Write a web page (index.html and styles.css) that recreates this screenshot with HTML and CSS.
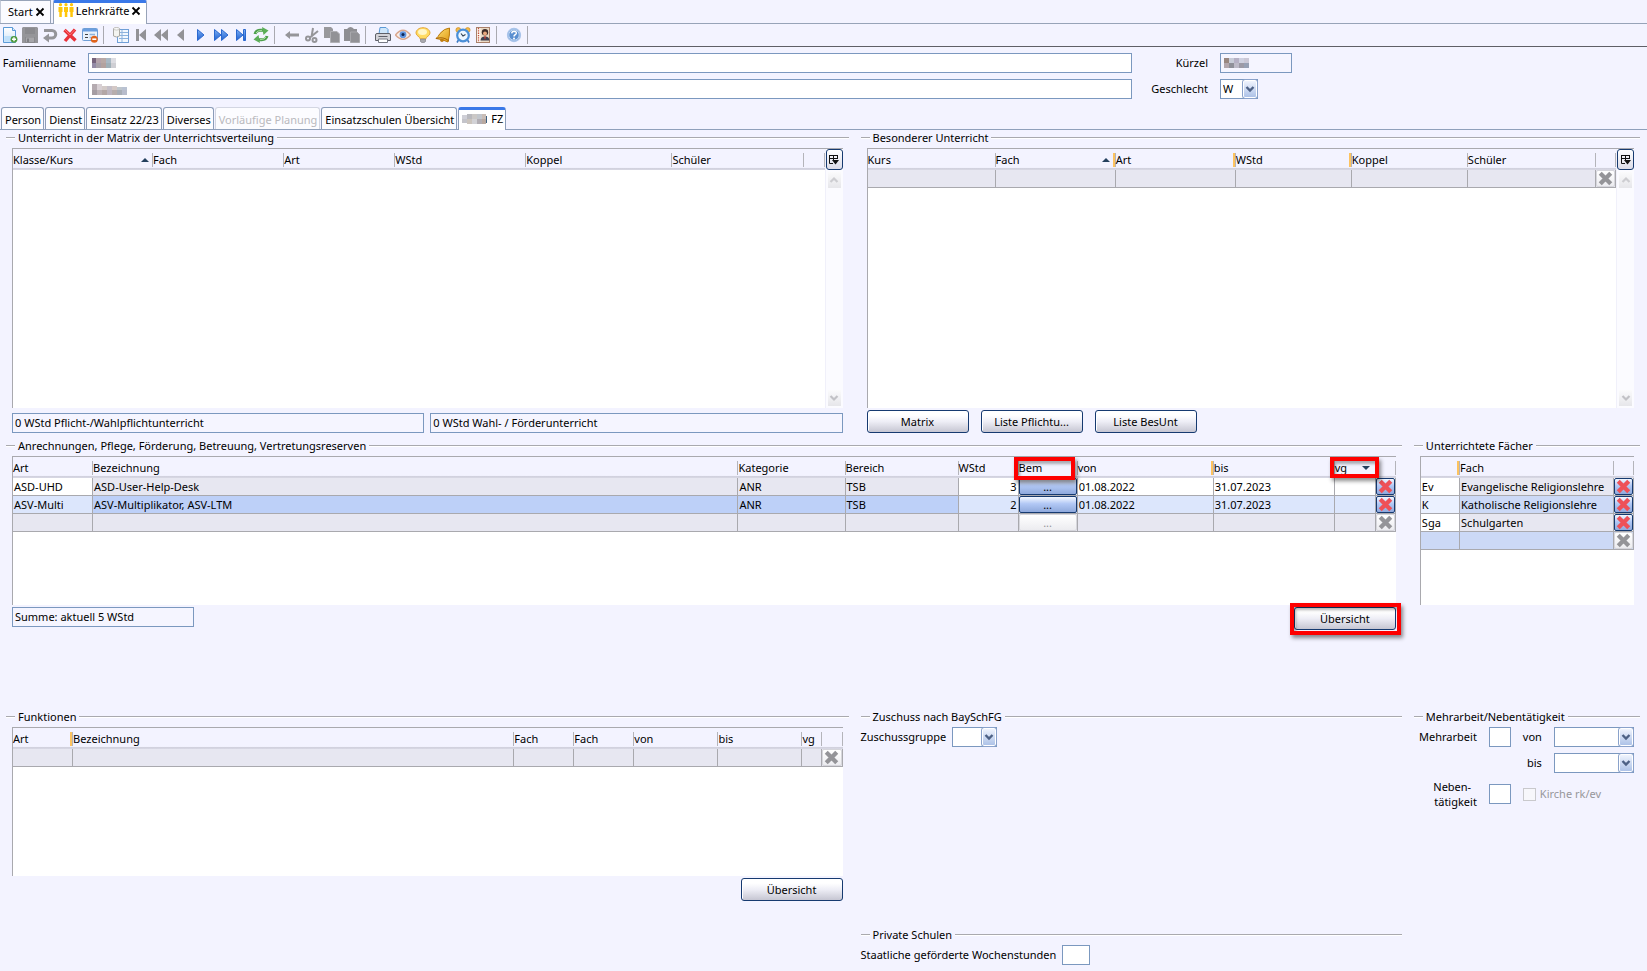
FILE: index.html
```html
<!DOCTYPE html>
<html lang="de">
<head>
<meta charset="utf-8">
<title>Lehrkräfte</title>
<link rel="stylesheet" href="styles.css">
</head>
<body>
<svg class="defs" aria-hidden="true">
  <defs>
    <linearGradient id="gBlue" x1="0" y1="0" x2="0" y2="1"><stop offset="0" stop-color="#7db0f5"/><stop offset="1" stop-color="#1d5fd0"/></linearGradient>
    <linearGradient id="gGold" x1="0" y1="0" x2="1" y2="1"><stop offset="0" stop-color="#ffe27a"/><stop offset="1" stop-color="#e09a10"/></linearGradient>
    <linearGradient id="gPage" x1="0" y1="0" x2="0" y2="1"><stop offset="0" stop-color="#ffffff"/><stop offset="1" stop-color="#cfe4f8"/></linearGradient>
    <symbol id="cross" viewBox="2 2 12 12"><path d="M3.8 3.8 L12.2 12.2 M12.2 3.8 L3.8 12.2" fill="none" stroke="currentColor" stroke-width="3.4"/></symbol>
    <symbol id="close" viewBox="0 0 10 10"><path d="M1.5 1.5 L8.5 8.5 M8.5 1.5 L1.5 8.5" fill="none" stroke="#000" stroke-width="1.8"/></symbol>
    <symbol id="chev" viewBox="0 0 10 8"><path d="M1.5 2 L5 5.5 L8.5 2" fill="none" stroke="#4d6185" stroke-width="2.4"/></symbol>
    <symbol id="colsel" viewBox="0 0 12 12"><path d="M1 1.5 H10 M1 4.5 H10 M1.5 1 V9.5 H5 M5.5 1 V6 M9.5 1 V5" fill="none" stroke="#111"/><path d="M4 6 H11 L7.5 10.5 Z" fill="#111"/></symbol>
    <symbol id="up" viewBox="0 0 12 12"><path d="M2.5 8 L6 4.5 L9.5 8" fill="none" stroke="#cdcdd1" stroke-width="2.2"/></symbol>
    <symbol id="down" viewBox="0 0 12 12"><path d="M2.5 4 L6 7.5 L9.5 4" fill="none" stroke="#c2c2c6" stroke-width="2.2"/></symbol>
  </defs>
</svg>

<nav class="windows" aria-label="Fenster">
  <div class="wtab"><span>Start</span><button class="x" aria-label="Start schließen"><svg width="10" height="10"><use href="#close"/></svg></button></div>
  <div class="wtab active">
    <svg width="16" height="14" viewBox="0 0 16 14" fill="#ffc60a"><circle cx="2.5" cy="1.7" r="1.6"/><circle cx="8" cy="1.7" r="1.6"/><circle cx="13.5" cy="1.7" r="1.6"/><path d="M.5 4 H4.5 V9 H3.8 V14 H1.3 V9 H.5Z M6 4 H10 V9 H9.3 V14 H6.8 V9 H6Z M11.5 4 H15.5 V9 H14.8 V14 H12.3 V9 H11.5Z"/></svg>
    <span>Lehrkräfte</span><button class="x" aria-label="Lehrkräfte schließen"><svg width="10" height="10"><use href="#close"/></svg></button></div>
</nav>

<div class="toolbar" role="toolbar" aria-label="Werkzeuge">
  <button aria-label="Neu"><svg viewBox="0 0 16 16"><path d="M1.5 .5 H10.5 L13.5 3.5 V15.5 H1.5Z" fill="url(#gPage)" stroke="#5b9ad6"/><path d="M10.5 .5 V3.5 H13.5" fill="#dcecfb" stroke="#5b9ad6"/><path d="M2.5 9 H12.5 V14.5 H2.5Z" fill="#bfe0fa"/><circle cx="12" cy="12.3" r="3.4" fill="#4d9a3c"/><path d="M12 10.3 V14.3 M10 12.3 H14" stroke="#fff" stroke-width="1.4"/></svg></button>
  <button aria-label="Speichern"><svg viewBox="0 0 16 16"><path d="M1 0 H15 L16 1 V16 H0 V1Z" fill="#959599"/><path d="M3 1 H13 V7 H3Z M3 10 H13 V16 H3Z" fill="#8a8a8e"/><path d="M4 10.5 H12 V15 H4Z" fill="#a6a6aa"/><path d="M5 11.5 H7 V15 H5Z" fill="#808084"/></svg></button>
  <button aria-label="Rückgängig"><svg viewBox="0 0 16 16"><path d="M2 3.5 H10 A3.7 3.7 0 0 1 10 11 H6" fill="none" stroke="#959599" stroke-width="3"/><path d="M1 11 L7 6.5 V15.5Z" fill="#959599"/></svg></button>
  <button aria-label="Löschen"><svg viewBox="0 0 16 16"><path d="M2.5 3 L13.5 13.5 M13 2.5 L3 14" fill="none" stroke="#e8323a" stroke-width="3.4"/><path d="M3 3 L8 8 L12.5 3" fill="none" stroke="#ff7070"/></svg></button>
  <button aria-label="Datensatz entfernen"><svg viewBox="0 0 16 16"><rect x=".5" y="1.5" width="15" height="12" rx="1" fill="#e9f2fc" stroke="#6f9fd6"/><path d="M1 2 H15 V4.5 H1Z" fill="#6a9fe0"/><path d="M3 7.5 H6 M3 10.5 H6" stroke="#444" stroke-width="1.2"/><path d="M7.5 7.5 H13 M7.5 10.5 H10" stroke="#8fb4dc" stroke-width="1.6"/><circle cx="12.3" cy="12.2" r="3.5" fill="#e0641c"/><path d="M10.3 12.2 H14.3" stroke="#fff" stroke-width="1.6"/></svg></button>
  <span class="sep"></span>
  <button aria-label="Listenansicht"><svg viewBox="0 0 16 16"><rect x="4.5" y="2.5" width="11" height="13" fill="#f2f8fe" stroke="#6f9fd6"/><path d="M6 5.5 H15 M6 8.5 H15 M6 11.5 H15 M9 3 V15" stroke="#8db3dd"/><path d="M.5 1.5 Q3.500 -.5 6.500 1.500 V9 Q3.500 11 .5 9Z" fill="#f4f4f0" stroke="#aaa9a4"/><ellipse cx="3.500" cy="1.800" rx="3" ry="1.200" fill="#fff" stroke="#b5b4b0" stroke-width=".7"/></svg></button>
  <button aria-label="Erster"><svg viewBox="0 0 16 16" fill="#929296"><path d="M3 2 H6 V14 H3Z M13 2 V14 L6 8Z"/></svg></button>
  <button aria-label="Schnell zurück"><svg viewBox="0 0 16 16" fill="#929296"><path d="M8 2 V14 L1 8Z M15 2 V14 L8 8Z"/></svg></button>
  <button aria-label="Zurück"><svg viewBox="0 0 16 16" fill="#929296"><path d="M11 2 V14 L4 8Z"/></svg></button>
  <button aria-label="Weiter"><svg viewBox="0 0 16 16" fill="url(#gBlue)" stroke="#2a68cf"><path d="M4.500 2.500 V13.500 L11 8Z"/></svg></button>
  <button aria-label="Schnell vor"><svg viewBox="0 0 16 16" fill="url(#gBlue)" stroke="#2a68cf"><path d="M1.500 2.500 V13.500 L8 8Z M8.500 2.500 V13.500 L15 8Z"/></svg></button>
  <button aria-label="Letzter"><svg viewBox="0 0 16 16" fill="url(#gBlue)" stroke="#2a68cf"><path d="M3.500 2.500 V13.500 L10 8Z M10.500 2.500 H12.500 V13.500 H10.500Z"/></svg></button>
  <button aria-label="Aktualisieren"><svg viewBox="0 0 16 16"><path d="M2 7 Q3 3 8 3.300 H10" fill="none" stroke="#4ea04c" stroke-width="3"/><path d="M9 0 L15.500 3.500 L10.500 8Z" fill="#5cae58"/><path d="M14 9 Q13 13 8 12.700 H6" fill="none" stroke="#4ea04c" stroke-width="3"/><path d="M7 16 L.5 12.500 L5.500 8Z" fill="#5cae58"/><path d="M3 6 Q4 3.500 9 3.300 M13 10 Q12 12.500 7 12.700" fill="none" stroke="#a9dba2"/></svg></button>
  <span class="sep"></span>
  <button aria-label="Pfeil zurück"><svg viewBox="0 0 16 16" fill="#959599"><path d="M1 8 L6 4 V6.500 H15 V9.500 H6 V12Z"/></svg></button>
  <button aria-label="Ausschneiden"><svg viewBox="0 0 16 16" fill="none" stroke="#959599" stroke-width="2"><path d="M9 1 L7.500 10 M14 4 L6 10.500"/><circle cx="4" cy="11.500" r="2"/><circle cx="10.500" cy="13" r="2"/></svg></button>
  <button aria-label="Kopieren"><svg viewBox="0 0 16 16"><path d="M0 0 H7 L9 2 V11 H0Z" fill="#98989c"/><path d="M6.500 4.500 H13 L15.500 7 V15.500 H6.500Z" fill="#929296" stroke="#b0b0b4"/></svg></button>
  <button aria-label="Einfügen"><svg viewBox="0 0 16 16"><path d="M0 2 H3 Q6.500 -2 10 2 H13 V14 H0Z" fill="#8f8f93"/><path d="M6.500 5 H13 L15.500 7.500 V15.500 H6.500Z" fill="#929296" stroke="#a8a8ac"/></svg></button>
  <span class="sep"></span>
  <button aria-label="Drucken"><svg viewBox="0 0 16 16"><path d="M4 7 L5 .5 H11 L13 2.500 V7Z" fill="#cfe6fa" stroke="#5b9ad6"/><path d="M.5 8 Q.5 6.500 2 6.500 H14 Q15.500 6.500 15.500 8 V13.500 H.5Z" fill="#d3d3d8" stroke="#5e6068"/><path d="M3.500 9.500 H12.500" stroke="#5e6068"/><path d="M3.500 12 H12.500 V15.500 H3.500Z" fill="#fff" stroke="#777a84"/></svg></button>
  <button aria-label="Vorschau"><svg viewBox="0 0 16 16"><path d="M.5 8 Q8 -1.500 15.500 8 Q8 16.500 .5 8Z" fill="#fbeee6" stroke="#d8a58c" stroke-width="1.300"/><circle cx="8" cy="7.700" r="3.400" fill="#5f93de"/><circle cx="8" cy="7.500" r="1.500" fill="#0d2554"/></svg></button>
  <button aria-label="Hinweis"><svg viewBox="0 0 16 16"><path d="M8 .7 C3.500 .7 1 3.500 1 6 C1 9 5 9.500 5.300 12 H10.700 C11 9.500 15 9 15 6 C15 3.500 12.500 .7 8 .7Z" fill="#ffdb62" stroke="#e5a83a"/><ellipse cx="7.500" cy="5" rx="4.500" ry="3" fill="#fff6c8"/><path d="M5.500 12 H10.500 V14.500 L9 15.700 H7 L5.500 14.500Z" fill="#a8a8ae" stroke="#77777c" stroke-width=".6"/></svg></button>
  <button aria-label="Erinnerung"><svg viewBox="0 0 16 16"><path d="M14.500 1 Q15 8 13 15 Q7 12 1 11.500 Q3 10 5 6.500 Q9 1.500 14.500 1Z" fill="url(#gGold)" stroke="#b9790c"/><path d="M1 11.500 Q8 9 14 14" fill="none" stroke="#a8650a"/><circle cx="7" cy="13.300" r="1.800" fill="#c07c10"/></svg></button>
  <button aria-label="Wecker"><svg viewBox="0 0 16 16"><circle cx="3.300" cy="3" r="2.400" fill="#f3bb4a" stroke="#cc8a20" stroke-width=".7"/><circle cx="12.700" cy="3" r="2.400" fill="#f3bb4a" stroke="#cc8a20" stroke-width=".7"/><path d="M3.500 13 L2 15.500 M12.500 13 L14 15.500" stroke="#3b78c0" stroke-width="1.600"/><circle cx="8" cy="8.500" r="5.800" fill="#eef7ff" stroke="#4a8fd8" stroke-width="2.200"/><path d="M6 6.500 L8 9 L10.500 7.500" fill="none" stroke="#345" stroke-width="1.200"/></svg></button>
  <button aria-label="Adressbuch"><svg viewBox="0 0 16 16"><rect x="1.500" y=".5" width="13" height="15" fill="#fbf6ee" stroke="#a8806a"/><path d="M3.500 1 V15" stroke="#c34d3c" stroke-width="1.300" stroke-dasharray="1.300 1"/><path d="M5.500 1 H14 V15 H5.500Z" fill="#ead9c4"/><circle cx="10" cy="5.200" r="3.200" fill="#3e2c28"/><circle cx="10" cy="6.600" r="2" fill="#e8a87e"/><path d="M5.500 13.500 Q5.700 9.500 10 9.500 Q14.300 9.500 14.500 13.500Z" fill="#3c4152"/><path d="M9 9.500 H11 L10 13Z" fill="#d23c2e"/></svg></button>
  <span class="sep"></span>
  <button aria-label="Hilfe"><svg viewBox="0 0 16 16"><circle cx="8" cy="8" r="6.400" fill="#5a8fd0" stroke="#a9c4ea" stroke-width="1.500"/><circle cx="8" cy="8" r="5.200" fill="none" stroke="#d5e4f7" stroke-width=".8"/><path d="M5.700 6.300 Q6 4.200 8.100 4.200 Q10.400 4.300 10.300 6.200 Q10.200 7.300 8.800 8 Q8 8.500 8 9.600" fill="none" stroke="#fff" stroke-width="1.500"/><circle cx="8" cy="11.500" r="1" fill="#fff"/></svg></button>
  <span class="sep"></span>
</div>

<form class="person">
  <label for="fam">Familienname</label>
  <div class="masked"><input id="fam" class="field">
    <svg class="mosaic" width="24" height="10" shape-rendering="crispEdges"><path d="M0 0h4v5H0z" fill="#77647c"/><path d="M4 0h5v5H4z" fill="#b4a3ab"/><path d="M9 0h5v5H9z" fill="#b8a9a6"/><path d="M14 0h5v5h-5z" fill="#a9b8c4"/><path d="M19 0h5v5h-5z" fill="#dddde2"/><path d="M0 5h4v5H0z" fill="#948ba6"/><path d="M4 5h5v5H4z" fill="#a7a0a8"/><path d="M9 5h5v5H9z" fill="#b3a29f"/><path d="M14 5h5v5h-5z" fill="#9fb0b8"/><path d="M19 5h5v5h-5z" fill="#cfcfd4"/></svg></div>
  <label for="kuerzel">Kürzel</label>
  <div class="masked"><input id="kuerzel" class="field w-kuerzel" readonly>
    <svg class="mosaic" width="25" height="10" shape-rendering="crispEdges"><path d="M0 0h5v5H0z" fill="#98867f"/><path d="M5 0h5v5H5z" fill="#c8ccd8"/><path d="M10 0h5v5h-5z" fill="#b5b0c4"/><path d="M15 0h5v5h-5z" fill="#cfd1e0"/><path d="M20 0h5v5h-5z" fill="#cbc8d6"/><path d="M0 5h5v5H0z" fill="#b2a6ac"/><path d="M5 5h5v5H5z" fill="#8f9099"/><path d="M10 5h5v5h-5z" fill="#bdbac8"/><path d="M15 5h5v5h-5z" fill="#9c9aa6"/><path d="M20 5h5v5h-5z" fill="#97a0b4"/></svg></div>
  <label for="vor">Vornamen</label>
  <div class="masked"><input id="vor" class="field">
    <svg class="mosaic" width="35" height="11" shape-rendering="crispEdges"><path d="M0 0h5v6H0z" fill="#b5abb0"/><path d="M5 0h5v6H5z" fill="#d8d0d4"/><path d="M10 2h5v4h-5z" fill="#d3cac7"/><path d="M15 2h5v4h-5z" fill="#c4bfc8"/><path d="M20 2h5v4h-5z" fill="#d3c8c5"/><path d="M25 3h5v3h-5z" fill="#bfc6cc"/><path d="M30 3h5v3h-5z" fill="#b9c2d2"/><path d="M0 6h5v5H0z" fill="#a59da2"/><path d="M5 6h5v5H5z" fill="#bcb3b6"/><path d="M10 6h5v5h-5z" fill="#b3a7a6"/><path d="M15 6h5v5h-5z" fill="#bdb6c0"/><path d="M20 6h5v5h-5z" fill="#b7aead"/><path d="M25 6h5v5h-5z" fill="#a8aeb6"/><path d="M30 6h5v5h-5z" fill="#b7bccb"/></svg></div>
  <label for="geschl">Geschlecht</label>
  <div class="combo w-geschl"><select id="geschl"><option>W</option></select><span class="arrow"><svg width="10" height="8"><use href="#chev"/></svg></span></div>
</form>

<nav class="tabs" aria-label="Bereiche">
  <button class="tab">Person</button><button class="tab">Dienst</button><button class="tab">Einsatz 22/23</button><button class="tab">Diverses</button><button class="tab" disabled>Vorläufige Planung</button><button class="tab">Einsatzschulen Übersicht</button><button class="tab active"><svg width="25" height="10" shape-rendering="crispEdges"><path d="M0 1h5v4H0z" fill="#cfcfd6"/><path d="M5 0h5v5H5z" fill="#b9b9be"/><path d="M10 0h5v5h-5z" fill="#cbc8c6"/><path d="M15 0h5v5h-5z" fill="#c2c6cc"/><path d="M20 0h4v5h-4z" fill="#c9bdb6"/><path d="M0 5h5v4H0z" fill="#c4c4ca"/><path d="M5 5h5v5H5z" fill="#cbc4bd"/><path d="M10 5h5v5h-5z" fill="#d2d2d6"/><path d="M15 5h5v5h-5z" fill="#b2aeb4"/><path d="M20 5h4v5h-4z" fill="#b9a9a0"/><path d="M24 2h1v7h-1z" fill="#3c5f80"/></svg>FZ</button>
</nav>

<main class="board">
  <section class="c1">
    <h2>Unterricht in der Matrix der Unterrichtsverteilung</h2>
    <div class="box tall">
      <table class="t-matrix">
        <colgroup><col><col><col><col><col><col><col></colgroup>
        <thead><tr><th class="asc">Klasse/Kurs</th><th>Fach</th><th>Art</th><th>WStd</th><th>Koppel</th><th>Schüler</th><th></th></tr></thead>
      </table>
      <div class="scroll"><button class="colsel" aria-label="Spalten wählen"><svg width="12" height="12"><use href="#colsel"/></svg></button><button class="sb" aria-label="Nach oben"><svg width="12" height="12"><use href="#up"/></svg></button><span class="track"></span><button class="sb" aria-label="Nach unten"><svg width="12" height="12"><use href="#down"/></svg></button></div>
    </div>
    <div class="foot">
      <input class="field grow" readonly aria-label="Pflichtunterricht" value="0 WStd Pflicht-/Wahlpflichtunterricht">
      <input class="field grow" readonly aria-label="Wahlunterricht" value="0 WStd Wahl- / Förderunterricht">
    </div>
  </section>

  <section class="c23">
    <h2>Besonderer Unterricht</h2>
    <div class="box tall">
      <table class="t-bes">
        <colgroup><col><col><col><col><col><col><col></colgroup>
        <thead><tr><th>Kurs</th><th class="asc mark">Fach</th><th class="mark">Art</th><th class="mark">WStd</th><th>Koppel</th><th>Schüler</th><th></th></tr></thead>
        <tbody><tr class="empty"><td></td><td></td><td></td><td></td><td></td><td></td><td class="act"><button class="del" disabled aria-label="Zeile löschen"><svg width="15" height="15"><use href="#cross"/></svg></button></td></tr></tbody>
      </table>
      <div class="scroll"><button class="colsel" aria-label="Spalten wählen"><svg width="12" height="12"><use href="#colsel"/></svg></button><button class="sb" aria-label="Nach oben"><svg width="12" height="12"><use href="#up"/></svg></button><span class="track"></span><button class="sb" aria-label="Nach unten"><svg width="12" height="12"><use href="#down"/></svg></button></div>
    </div>
    <div class="foot wide-gap">
      <button class="btn">Matrix</button><button class="btn">Liste Pflichtu...</button><button class="btn">Liste BesUnt</button>
    </div>
  </section>

  <section class="c12">
    <h2>Anrechnungen, Pflege, Förderung, Betreuung, Vertretungsreserven</h2>
    <div class="box">
      <table class="t-anr">
        <colgroup><col><col><col><col><col><col><col><col><col><col></colgroup>
        <thead><tr><th>Art</th><th>Bezeichnung</th><th>Kategorie</th><th>Bereich</th><th>WStd</th><th>Bem<span class="hl hl-bem"></span></th><th class="mark">von</th><th>bis</th><th class="desc">vg<span class="hl hl-vg"></span></th><th></th></tr></thead>
        <tbody>
          <tr><td>ASD-UHD</td><td class="ro">ASD-User-Help-Desk</td><td class="ro">ANR</td><td class="ro">TSB</td><td class="num">3</td><td class="act"><button class="more">...</button></td><td>01.08.2022</td><td>31.07.2023</td><td></td><td class="act"><button class="del" aria-label="Zeile löschen"><svg width="15" height="15"><use href="#cross"/></svg></button></td></tr>
          <tr class="sel"><td>ASV-Multi</td><td class="ro">ASV-Multiplikator, ASV-LTM</td><td class="ro">ANR</td><td class="ro">TSB</td><td class="num">2</td><td class="act"><button class="more">...</button></td><td>01.08.2022</td><td>31.07.2023</td><td></td><td class="act"><button class="del" aria-label="Zeile löschen"><svg width="15" height="15"><use href="#cross"/></svg></button></td></tr>
          <tr class="empty"><td></td><td></td><td></td><td></td><td></td><td class="act"><button class="more" disabled>...</button></td><td></td><td></td><td></td><td class="act"><button class="del" disabled aria-label="Zeile löschen"><svg width="15" height="15"><use href="#cross"/></svg></button></td></tr>
        </tbody>
      </table>
    </div>
    <div class="foot between">
      <input class="field w-sum" readonly aria-label="Summe" value="Summe: aktuell 5 WStd">
      <div class="hl-wrap"><button class="btn">Übersicht</button><span class="hl hl-btn"></span></div>
    </div>
  </section>

  <section class="c3">
    <h2>Unterrichtete Fächer</h2>
    <div class="box">
      <table class="t-fach">
        <colgroup><col><col><col></colgroup>
        <thead><tr><th class="mark"></th><th>Fach</th><th></th></tr></thead>
        <tbody>
          <tr><td>Ev</td><td class="ro">Evangelische Religionslehre</td><td class="act"><button class="del" aria-label="Zeile löschen"><svg width="15" height="15"><use href="#cross"/></svg></button></td></tr>
          <tr class="alt"><td>K</td><td class="ro">Katholische Religionslehre</td><td class="act"><button class="del" aria-label="Zeile löschen"><svg width="15" height="15"><use href="#cross"/></svg></button></td></tr>
          <tr><td>Sga</td><td class="ro">Schulgarten</td><td class="act"><button class="del" aria-label="Zeile löschen"><svg width="15" height="15"><use href="#cross"/></svg></button></td></tr>
          <tr class="alt-empty"><td></td><td></td><td class="act"><button class="del" disabled aria-label="Zeile löschen"><svg width="15" height="15"><use href="#cross"/></svg></button></td></tr>
        </tbody>
      </table>
    </div>
  </section>

  <section class="c1 lower">
    <h2>Funktionen</h2>
    <div class="box">
      <table class="t-funk">
        <colgroup><col><col><col><col><col><col><col><col></colgroup>
        <thead><tr><th class="mark">Art</th><th>Bezeichnung</th><th>Fach</th><th>Fach</th><th>von</th><th>bis</th><th>vg</th><th></th></tr></thead>
        <tbody><tr class="empty"><td></td><td></td><td></td><td></td><td></td><td></td><td></td><td class="act"><button class="del" disabled aria-label="Zeile löschen"><svg width="15" height="15"><use href="#cross"/></svg></button></td></tr></tbody>
      </table>
    </div>
    <div class="foot end"><button class="btn">Übersicht</button></div>
  </section>

  <section class="c2 lower">
    <h2>Zuschuss nach BaySchFG</h2>
    <div class="line"><label for="zg">Zuschussgruppe</label>
      <div class="combo w-zg"><select id="zg"><option></option></select><span class="arrow"><svg width="10" height="8"><use href="#chev"/></svg></span></div></div>
  </section>

  <section class="c3 lower">
    <h2>Mehrarbeit/Nebentätigkeit</h2>
    <div class="extra">
      <label for="ma">Mehrarbeit</label><input id="ma" class="field">
      <label for="von">von</label><div class="combo"><select id="von"><option></option></select><span class="arrow"><svg width="10" height="8"><use href="#chev"/></svg></span></div>
      <label for="bis" class="bis">bis</label><div class="combo"><select id="bis"><option></option></select><span class="arrow"><svg width="10" height="8"><use href="#chev"/></svg></span></div>
      <label for="nt" class="two">Neben-&nbsp;&nbsp;<br>tätigkeit</label><input id="nt" class="field">
      <label class="check"><input type="checkbox" disabled>Kirche rk/ev</label>
    </div>
  </section>

  <section class="c2 private">
    <h2>Private Schulen</h2>
    <div class="line"><label for="ws">Staatliche geförderte Wochenstunden</label><input id="ws" class="field w-ws"></div>
  </section>
</main>
</body>
</html>
```

FILE: styles.css
```css
:root {
  --bg: #f3f3ff;
  --edge: #7b98bf;
  --rule: #a9a9ae;
  --ro: #e7e7f1;
  --navy: #163a70;
}
* { box-sizing: border-box; }
body {
  margin: 0;
  background: var(--bg);
  color: #000;
  font: 11px/16px "Noto Sans", "Open Sans", sans-serif;
}
button, input, select { font: inherit; color: inherit; margin: 0; padding: 0; border-radius: 0; }
button { background: none; border: 0; }
svg { display: block; }
.defs { position: absolute; width: 0; height: 0; }

/* window tabs */
.windows { display: flex; gap: 2px; height: 24px; border-bottom: 1px solid #97a3b8; }
.wtab {
  display: flex; align-items: flex-start; gap: 2px; height: 23px; padding: 3px 5px 0 7px;
  background: #fbfbff; border: 1px solid #97a3b8; border-bottom: 0; border-left-color: #c4cad8;
}
.wtab.active { background: #fff; border-left-color: #97a3b8; border-top: 3px solid #3a78e8; padding: 0 5px 0 4px; height: 24px; border-radius: 2px 2px 0 0; }
.wtab .x { width: 10px; height: 14px; padding-top: 2px; }

/* toolbar */
.toolbar { display: flex; height: 23px; align-items: center; border-bottom: 1px solid #5f5f66; }
.toolbar button { width: 20px; height: 20px; padding: 2px; }
.toolbar svg { width: 16px; height: 16px; }
.sep { width: 11px; height: 18px; background: linear-gradient(#a9a9b0, #a9a9b0) 3px 0 / 1px 100% no-repeat; }

/* fields */
.field {
  height: 20px; border: 1px solid var(--edge); background: #fff; padding: 0 2px 1px; min-width: 0; width: 100%;
}
.field:read-only { background: #f5f5ff; }
.field.grow { flex: 1; }
.masked { position: relative; height: 20px; }
.masked .mosaic { position: absolute; left: 4px; top: 5px; }
.combo { position: relative; height: 20px; }
.combo select {
  appearance: none; width: 100%; height: 20px; border: 1px solid var(--edge); background: #fff; padding: 0 18px 0 2px;
}
.combo .arrow {
  position: absolute; right: 0; top: 0; width: 16px; height: 20px; display: grid; place-items: center; pointer-events: none;
  border: 1px solid #8aa2cb; border-radius: 3px; background: linear-gradient(#f4f7ff, #a9bfe6); box-shadow: inset 0 0 0 1px #fff;
}
.w-kuerzel { width: 72px; }
.w-geschl { width: 38px; }
.w-zg { width: 45px; }
.w-ws { width: 28px; }
.w-sum { width: 182px; }

.person {
  display: grid; grid-template-columns: 76px minmax(0, 1044fr) 64px minmax(0, 427fr);
  column-gap: 12px; row-gap: 6px; padding: 6px 0 8px; align-items: center;
}
.person > label { text-align: right; }

/* section tabs */
.tabs { display: flex; gap: 1px; padding-left: 1px; height: 23px; align-items: flex-end; border-bottom: 1px solid #8fa0bb; }
.tab {
  height: 22px; padding: 2px 2px 0 3px; white-space: nowrap;
  background: #fcfcff; border: 1px solid #8b9cb8; border-bottom: 0; border-radius: 3px 3px 0 0;
}
.tab:disabled { color: #b9b9bd; border-color: #d3d6e2; }
.tab.active { display: flex; align-items: center; gap: 4px; height: 23px; margin-bottom: -1px; padding: 0 2px 3px 3px; background: #fff; border-top: 3px solid #3a78e8; }

/* sections */
.board {
  display: grid; grid-template-columns: minmax(0, 842fr) minmax(0, 541fr) minmax(0, 226fr);
  column-gap: 12px; row-gap: 5px; padding: 0 7px 0 6px;
}
.c1 { grid-column: 1; }
.c2 { grid-column: 2; }
.c3 { grid-column: 3; }
.c12 { grid-column: 1 / 3; }
.c23 { grid-column: 2 / 4; }
.lower { padding-top: 74px; }
.private { padding-top: 21px; }
h2 {
  display: flex; align-items: center; gap: 3px; margin: 0 0 3px; height: 15px;
  font-size: inherit; line-height: 15px; font-weight: normal; white-space: nowrap;
}
h2::before, h2::after { content: ""; height: 2px; background: linear-gradient(var(--rule) 50%, #fff 50%); }
h2::before { width: 9px; }
h2::after { flex: 1; }
.box {
  display: flex; align-items: flex-start; min-height: 149px; margin: 0 6px; background: #fff;
  border-top: 1px solid var(--rule); border-left: 1px solid var(--rule);
}
.tall { min-height: 260px; }
.foot { display: flex; align-items: flex-end; gap: 6px; min-height: 23px; margin: 2px 6px 0; }
.wide-gap { gap: 12px; }
.between { justify-content: space-between; align-items: flex-start; }
.end { justify-content: flex-end; }
.btn {
  width: 102px; height: 23px; border: 1px solid var(--navy); border-radius: 3px;
  background: linear-gradient(#ffffff 20%, #eeeef6 50%, #c6c6d2); box-shadow: inset 1px 1px 0 #fff;
}

/* tables */
table { flex: 1; width: 100%; min-width: 0; table-layout: fixed; border-collapse: separate; border-spacing: 0; }
th {
  position: relative; height: 21px; padding: 1px 0 0; text-align: left; font-weight: normal; white-space: nowrap;
  background: linear-gradient(#b4b4ba, #b4b4ba) right 4px / 1px 14px no-repeat, linear-gradient(var(--bg) 88%, #cfcfdc 90%, #d8d8e4);
}
th.mark {
  background: linear-gradient(90deg, #fdc35f 2px, #b4b4ba 2px) right 4px / 3px 14px no-repeat, linear-gradient(var(--bg) 88%, #cfcfdc 90%, #d8d8e4);
}
th.asc::after, th.desc::after {
  content: ""; position: absolute; right: 4px; top: 9px; border: 4px solid transparent; border-top: 0; border-bottom-color: #24405e;
}
th.asc.mark::after { right: 6px; }
th.desc::after { right: 6px; border-top: 4px solid #24405e; border-bottom: 0; }
td {
  height: 18px; padding: 0 1px; line-height: 17px; white-space: nowrap;
  border-right: 1px solid var(--rule); border-bottom: 1px solid var(--rule); background: #fff;
}
td.ro, .empty td { background: var(--ro); }
.sel td { background: #dce6fc; }
.sel td.ro { background: #bdd0f8; }
.alt td { background: #ebf1ff; }
.alt td.ro, .alt-empty td { background: #ccd9f6; }
td.num { text-align: right; }
td.act { padding: 0; }
.more, .del {
  display: grid; place-items: center; width: 100%; height: 17px; line-height: 14px;
  border: 1px solid var(--navy); border-radius: 2px; background: linear-gradient(#f4f8ff, #b2c8f5 45%, #8fa9dc);
}
.del { color: #ee5158; }
.more:disabled, .del:disabled { border-color: #d6d6dc; background: linear-gradient(#fff, #ececf0); color: #949498; }

.t-matrix col:nth-child(1) { width: 140px; }
.t-matrix col:nth-child(2) { width: 131px; }
.t-matrix col:nth-child(3) { width: 111px; }
.t-matrix col:nth-child(4) { width: 131px; }
.t-matrix col:nth-child(5) { width: 146px; }
.t-matrix col:nth-child(6) { width: 132px; }
.t-matrix col:nth-child(7) { width: 20px; }

.t-bes col:nth-child(1) { width: 128px; }
.t-bes col:nth-child(2) { width: 120px; }
.t-bes col:nth-child(3) { width: 120px; }
.t-bes col:nth-child(4) { width: 116px; }
.t-bes col:nth-child(5) { width: 116px; }
.t-bes col:nth-child(6) { width: 128px; }
.t-bes col:nth-child(7) { width: 20px; }

.t-anr col:nth-child(1) { width: 80px; }
.t-anr col:nth-child(2) { width: 645px; }
.t-anr col:nth-child(3) { width: 107px; }
.t-anr col:nth-child(4) { width: 113px; }
.t-anr col:nth-child(5) { width: 60px; }
.t-anr col:nth-child(6) { width: 59px; }
.t-anr col:nth-child(7) { width: 136px; }
.t-anr col:nth-child(8) { width: 121px; }
.t-anr col:nth-child(9) { width: 41px; }
.t-anr col:nth-child(10) { width: 20px; }

.t-fach col:nth-child(1) { width: 39px; }
.t-fach col:nth-child(2) { width: 153px; }
.t-fach col:nth-child(3) { width: 20px; }

.t-funk col:nth-child(1) { width: 60px; }
.t-funk col:nth-child(2) { width: 441px; }
.t-funk col:nth-child(3) { width: 60px; }
.t-funk col:nth-child(4) { width: 60px; }
.t-funk col:nth-child(5) { width: 84px; }
.t-funk col:nth-child(6) { width: 84px; }
.t-funk col:nth-child(7) { width: 20px; }
.t-funk col:nth-child(8) { width: 20px; }

/* scrollbar column */
.scroll { display: flex; flex-direction: column; align-self: stretch; width: 18px; background: #fbfbff; border-left: 1px solid #f0f0fa; }
.colsel {
  width: 17px; height: 21px; display: grid; place-items: center; border: 1px solid var(--navy); border-radius: 3px;
  background: linear-gradient(#fff, #dcdce8);
}
.sb { width: 13px; height: 16px; margin: 2px auto; display: grid; place-items: center; background: linear-gradient(#fbfbfc, #e6e6ea); }
.track { flex: 1; }

/* highlight frames */
.hl { position: absolute; z-index: 2; pointer-events: none; border: 4px solid #fe0000; box-shadow: 2px 3px 4px rgba(0, 0, 0, .45), inset 2px 3px 3px rgba(0, 0, 0, .3); }
.hl-bem { inset: 0 3px -2px -5px; }
.hl-vg { inset: 0 -3px 0 -5px; }
.hl-wrap { position: relative; }
.hl-btn { inset: -4px -5px -5px -4px; }

/* lower forms */
.line { display: flex; align-items: center; gap: 6px; }
.extra {
  display: grid; grid-template-columns: 63px 22px 19px minmax(0, 1fr); column-gap: 12px; row-gap: 6px;
  align-items: center; padding-right: 6px;
}
.extra > label { text-align: right; }
.extra .bis { grid-column: 3; }
.extra .two { line-height: 15px; }
.extra .check { grid-column: 3 / 5; display: flex; align-items: center; gap: 4px; color: #97979b; }
.check input { appearance: none; width: 13px; height: 13px; border: 1px solid #c9c9cc; background: #f7f7fb; }
```
